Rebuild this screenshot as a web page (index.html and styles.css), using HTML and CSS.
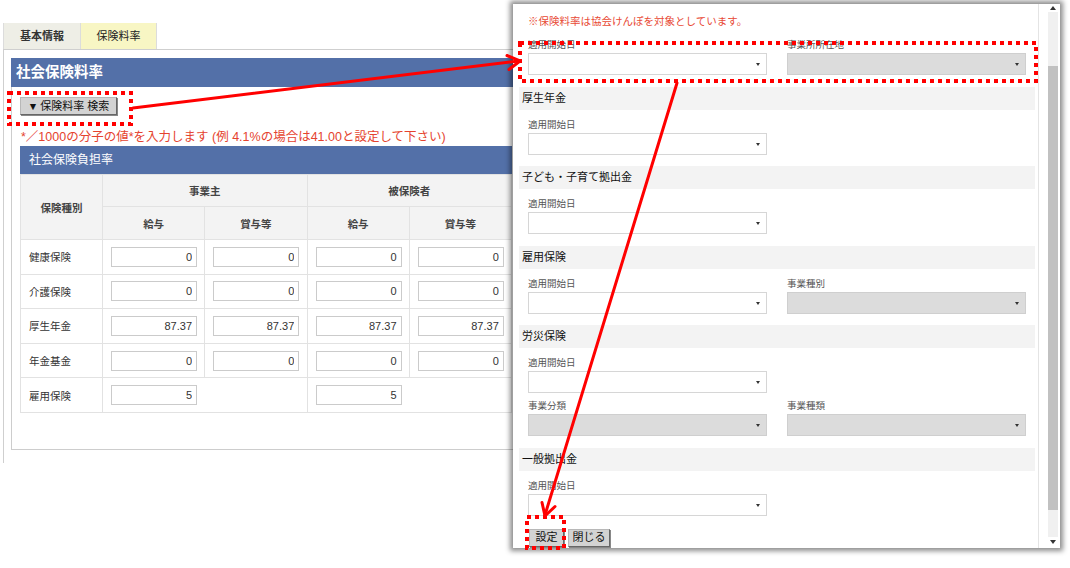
FILE: index.html
```html
<!DOCTYPE html>
<html lang="ja">
<head>
  <meta charset="UTF-8">
  <title>保険料率</title>
  <link rel="stylesheet" href="styles.css">
</head>
<body>
  <!-- 元の画面 -->
  <div class="page">
    <div class="tabs">
      <div class="tab tab-basic">基本情報</div>
      <div class="tab tab-rate">保険料率</div>
    </div>
    <div class="tab-body">
      <div class="panel">
        <div class="panel-head">社会保険料率</div>
        <div class="panel-body">
          <button class="btn btn-search"><span class="tri">▼</span>保険料率 検索</button>
          <p class="note">*／1000の分子の値*を入力します (例 4.1%の場合は41.00と設定して下さい)</p>
          <div class="grid-head">社会保険負担率</div>
          <table class="rate-table">
            <colgroup>
              <col class="c1"><col class="c2"><col class="c2"><col class="c2"><col class="c2">
            </colgroup>
            <tr class="th-row1">
              <th rowspan="2">保険種別</th>
              <th colspan="2">事業主</th>
              <th colspan="2">被保険者</th>
            </tr>
            <tr class="th-row2">
              <th>給与</th><th>賞与等</th><th>給与</th><th>賞与等</th>
            </tr>
            <tr>
              <td class="name">健康保険</td>
              <td><input class="num" value="0"></td>
              <td><input class="num" value="0"></td>
              <td><input class="num" value="0"></td>
              <td><input class="num" value="0"></td>
            </tr>
            <tr>
              <td class="name">介護保険</td>
              <td><input class="num" value="0"></td>
              <td><input class="num" value="0"></td>
              <td><input class="num" value="0"></td>
              <td><input class="num" value="0"></td>
            </tr>
            <tr>
              <td class="name">厚生年金</td>
              <td><input class="num" value="87.37"></td>
              <td><input class="num" value="87.37"></td>
              <td><input class="num" value="87.37"></td>
              <td><input class="num" value="87.37"></td>
            </tr>
            <tr>
              <td class="name">年金基金</td>
              <td><input class="num" value="0"></td>
              <td><input class="num" value="0"></td>
              <td><input class="num" value="0"></td>
              <td><input class="num" value="0"></td>
            </tr>
            <tr>
              <td class="name">雇用保険</td>
              <td colspan="2"><input class="num" value="5"></td>
              <td colspan="2"><input class="num" value="5"></td>
            </tr>
          </table>
        </div>
      </div>
    </div>
  </div>

  <!-- 検索ダイアログ -->
  <div class="dialog">
    <div class="dlg-main">
      <p class="dlg-note">※保険料率は協会けんぽを対象としています。</p>
      <div class="fields">
        <div class="row">
          <div class="field"><label>適用開始日</label><span class="select"></span></div>
          <div class="field"><label>事業所所在地</label><span class="select is-off"></span></div>
        </div>
      </div>

      <div class="section">
        <h3>厚生年金</h3>
        <div class="fields">
          <div class="row">
            <div class="field"><label>適用開始日</label><span class="select"></span></div>
          </div>
        </div>
      </div>

      <div class="section">
        <h3>子ども・子育て拠出金</h3>
        <div class="fields">
          <div class="row">
            <div class="field"><label>適用開始日</label><span class="select"></span></div>
          </div>
        </div>
      </div>

      <div class="section">
        <h3>雇用保険</h3>
        <div class="fields">
          <div class="row">
            <div class="field"><label>適用開始日</label><span class="select"></span></div>
            <div class="field"><label>事業種別</label><span class="select is-off"></span></div>
          </div>
        </div>
      </div>

      <div class="section">
        <h3>労災保険</h3>
        <div class="fields">
          <div class="row">
            <div class="field"><label>適用開始日</label><span class="select"></span></div>
          </div>
          <div class="row">
            <div class="field"><label>事業分類</label><span class="select is-off"></span></div>
            <div class="field"><label>事業種類</label><span class="select is-off"></span></div>
          </div>
        </div>
      </div>

      <div class="section">
        <h3>一般拠出金</h3>
        <div class="fields">
          <div class="row">
            <div class="field"><label>適用開始日</label><span class="select"></span></div>
          </div>
        </div>
      </div>

      <div class="actions">
        <button class="btn btn-set">設定</button>
        <button class="btn btn-close">閉じる</button>
      </div>
    </div>
    <div class="scrollbar">
      <span class="sb-up"></span>
      <span class="sb-track"><span class="sb-thumb"></span></span>
      <span class="sb-down"></span>
    </div>
  </div>

  <!-- 説明用の赤枠と矢印 -->
  <svg class="marks" width="1070" height="568" viewBox="0 0 1070 568">
    <g fill="none" stroke="#f00" stroke-width="4" stroke-dasharray="4 4">
      <rect x="9" y="93" width="122" height="31"/>
      <rect x="520" y="43" width="516" height="38"/>
      <rect x="527" y="517" width="37" height="31"/>
    </g>
    <g fill="none" stroke="#f00" stroke-width="3" stroke-linecap="round" stroke-linejoin="round">
      <line x1="133" y1="108" x2="519" y2="61"/>
      <polyline points="507,55.5 520,61 509,69.5"/>
      <line x1="677" y1="83" x2="545" y2="515"/>
      <polyline points="542,502.5 545,516 555,506.5"/>
    </g>
  </svg>
</body>
</html>
```

FILE: styles.css
```css
body{
  margin: 0;
  width: 1070px;
  height: 568px;
  overflow: hidden;
  position: relative;
  background: #fff;
  color: #333;
  font-family: "Liberation Sans", "Noto Sans CJK JP", sans-serif;
}
p, h3{
  margin: 0;
}

/* 元の画面 */
.page{
  padding: 23px 0 0 3px;
}
.tabs{
  display: flex;
  height: 26px;
}
.tab{
  width: 77px;
  box-sizing: border-box;
  text-align: center;
  font-size: 11px;
  line-height: 26px;
  color: #222;
  border-left: 1px solid #dcdcdc;
}
.tab-basic{
  background: #eeeee6;
  font-weight: bold;
  color: #333;
}
.tab-rate{
  background: #f8f6c4;
  border-right: 1px solid #dcdcdc;
}
.tab-body{
  width: 560px;
  height: 414px;
  box-sizing: border-box;
  border-top: 1px solid #cfcfcf;
  border-left: 1px solid #cfcfcf;
  padding: 8px 0 0 7px;
}
.panel{
  width: 560px;
  height: 392px;
  box-sizing: border-box;
  border: 1px solid #cdcdcd;
  border-top: 0;
}
.panel-head{
  height: 29px;
  line-height: 29px;
  margin: 0 -1px;
  padding-left: 5px;
  background: #5370a8;
  color: #fff;
  font-size: 14.5px;
  font-weight: bold;
}
.panel-body{
  padding: 10px 0 0 8px;
}
.btn{
  display: block;
  box-sizing: border-box;
  height: 18px;
  padding: 0;
  background: #d3d3d3;
  border: 1px solid #b8b8b8;
  border-right-color: #666;
  border-bottom-color: #666;
  box-shadow: 1px 1px 0 #888;
  font-family: inherit;
  font-size: 11px;
  color: #111;
  line-height: 15px;
}
.btn-search{
  width: 97px;
}
.btn-search .tri{
  font-size: 10.5px;
  margin-right: 2px;
}
.note{
  margin: 14px 0 1px;
  padding-left: 1px;
  line-height: 16px;
  font-size: 12.5px;
  color: #e5432e;
  white-space: nowrap;
}
.grid-head{
  width: 492px;
  height: 28px;
  box-sizing: border-box;
  line-height: 28px;
  padding-left: 9px;
  background: #5370a8;
  color: #fff;
  font-size: 12px;
}
.rate-table{
  width: 492px;
  border-collapse: collapse;
  table-layout: fixed;
}
.rate-table .c1{
  width: 82px;
}
.rate-table th,
.rate-table td{
  border: 1px solid #e2e2e2;
  padding: 0;
  font-size: 10.5px;
}
.rate-table th{
  background: #f3f3f3;
  color: #444;
  font-weight: bold;
  text-align: center;
}
.rate-table tr{
  height: 34.6px;
}
.rate-table .th-row1{
  height: 32px;
}
.rate-table .th-row2{
  height: 33px;
}
.rate-table td{
  padding-left: 8px;
}
.rate-table td.name{
  color: #333;
}
.num{
  display: block;
  width: 86px;
  height: 20px;
  box-sizing: border-box;
  border: 1px solid #cbcbcb;
  padding: 0 4px 0 0;
  text-align: right;
  font-family: "Liberation Sans", sans-serif;
  font-size: 11px;
  color: #333;
}

/* ダイアログ */
.dialog{
  position: absolute;
  left: 513px;
  top: 4px;
  width: 547px;
  height: 544px;
  display: flex;
  background: #fff;
  box-shadow: 0 0 5px 3px rgba(0, 0, 0, 0.45);
  overflow: hidden;
}
.dlg-main{
  flex: 1;
  padding: 9px 3px 0 6px;
  border-right: 1px solid #e4e4e4;
}
.dlg-note{
  padding-left: 9px;
  line-height: 16px;
  font-size: 10.5px;
  color: #e84a35;
  margin-bottom: 1px;
}
.fields{
  padding: 8px 0 0 9px;
}
.row{
  display: flex;
  gap: 20px;
}
.row + .row{
  margin-top: 6px;
}
.field{
  width: 239px;
}
.field label{
  display: block;
  line-height: 13px;
  margin-bottom: 2px;
  font-size: 9.5px;
  color: #555;
}
.select{
  display: block;
  position: relative;
  height: 22px;
  box-sizing: border-box;
  border: 1px solid #d6d6d6;
  background: #fff;
}
.select::after{
  content: "";
  position: absolute;
  right: 6px;
  top: 9px;
  border-left: 2px solid transparent;
  border-right: 2px solid transparent;
  border-top: 3px solid #333;
}
.select.is-off{
  background: #dcdcdc;
  border-color: #cfcfcf;
}
.section{
  margin-top: 11.5px;
}
.section:first-of-type{
  margin-top: 12px;
}
.section h3{
  height: 23px;
  line-height: 23px;
  padding-left: 3px;
  background: #f3f3f3;
  font-size: 11px;
  font-weight: normal;
  color: #111;
}
.actions{
  display: flex;
  gap: 4px;
  margin-top: 13px;
  padding-left: 10px;
}
.btn-set{
  width: 35px;
}
.btn-close{
  width: 42px;
}

/* スクロールバー */
.scrollbar{
  width: 10px;
  display: flex;
  flex-direction: column;
  padding: 0 2px 0 9px;
}
.sb-up,
.sb-down{
  position: relative;
  height: 8px;
}
.sb-down{
  height: 11px;
}
.sb-up::after,
.sb-down::after{
  content: "";
  position: absolute;
  left: 2px;
  border-left: 3px solid transparent;
  border-right: 3px solid transparent;
}
.sb-up::after{
  top: 2px;
  border-bottom: 4px solid #333;
}
.sb-down::after{
  top: 3px;
  border-top: 4px solid #333;
}
.sb-track{
  flex: 1;
  background: #f0f0f0;
}
.sb-thumb{
  display: block;
  margin-top: 54px;
  height: 444px;
  background: #c1c1c1;
}

/* 赤枠・矢印 */
.marks{
  position: absolute;
  left: 0;
  top: 0;
  pointer-events: none;
}
```
